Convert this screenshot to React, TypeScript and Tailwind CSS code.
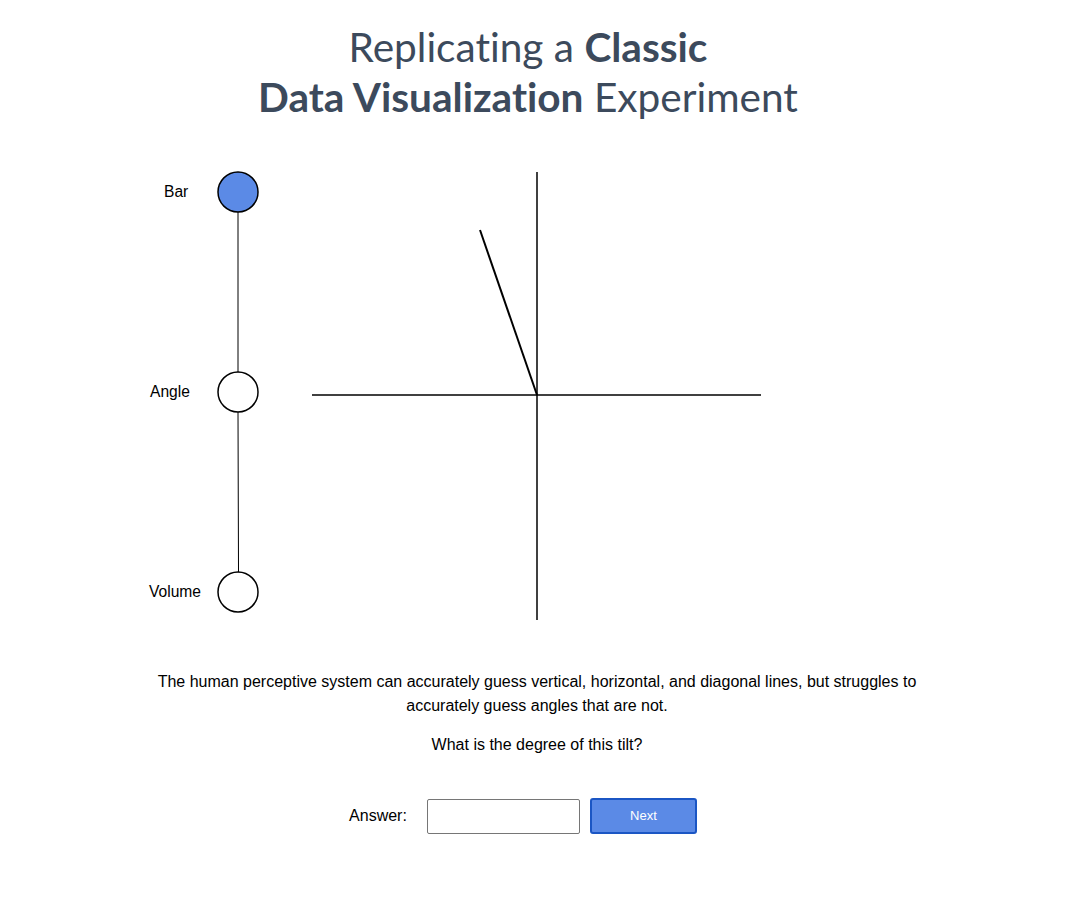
const Slider = () => {
  const stops = [
    { label: "Bar", x: 164, y: 192, active: true },
    { label: "Angle", x: 150, y: 392, active: false },
    { label: "Volume", x: 149, y: 592, active: false },
  ];
  return (
    <g>
      <line x1={238} y1={212} x2={238} y2={372} stroke="black" strokeWidth={1} />
      <line x1={238} y1={412} x2={238.5} y2={572} stroke="black" strokeWidth={1} />
      {stops.map((s) => (
        <g key={s.label}>
          <text
            x={s.x}
            y={s.y + 5}
            fontSize={15.6}
            fontFamily="'Liberation Sans', Arial, sans-serif"
            fill="black"
          >
            {s.label}
          </text>
          <circle
            cx={238}
            cy={s.y}
            r={20}
            fill={s.active ? "#5b8ae6" : "white"}
            stroke="black"
            strokeWidth={1.5}
          />
        </g>
      ))}
    </g>
  );
};

const AngleChart = () => (
  <g stroke="black">
    <line x1={537} y1={172} x2={537} y2={620} strokeWidth={1.5} />
    <line x1={312} y1={395} x2={761} y2={395} strokeWidth={1.5} />
    <line x1={537} y1={395} x2={480} y2={230} strokeWidth={2} />
  </g>
);

export default function App() {
  return (
    <div className="flex min-h-screen w-full flex-col items-center bg-white font-['Liberation_Sans',Arial,sans-serif] text-black">
      <h1 className="mt-[22px] pr-[18px] text-center font-['Lato',sans-serif] text-[40.6px] leading-[50px] text-[#3c4a5c] [font-variant-ligatures:none]">
        Replicating a <b className="font-bold">Classic</b>
        <br />
        <b className="font-bold">Data Visualization</b> Experiment
      </h1>

      <svg width={1074} height={480} viewBox="0 150 1074 480" className="mt-[28px] block">
        <Slider />
        <AngleChart />
      </svg>

      <p className="mt-[40px] w-[800px] text-center text-[16px] leading-[24px]">
        The human perceptive system can accurately guess vertical, horizontal, and diagonal lines, but struggles to
        accurately guess angles that are not.
      </p>
      <p className="mt-[15px] text-center text-[16px] leading-[24px]">What is the degree of this tilt?</p>

      <div className="mr-[28px] mt-[41px] flex items-center">
        <label className="text-[16px]">Answer:</label>
        <input
          type="text"
          className="ml-[20px] h-[35px] w-[153px] rounded-[2px] border border-[#767676] bg-white px-2 outline-none"
        />
        <button className="ml-[10px] h-[36px] w-[107px] rounded-[3px] border-2 border-[#1b56c4] bg-[#5b8ae6] text-[13px] text-white">
          Next
        </button>
      </div>
    </div>
  );
}
